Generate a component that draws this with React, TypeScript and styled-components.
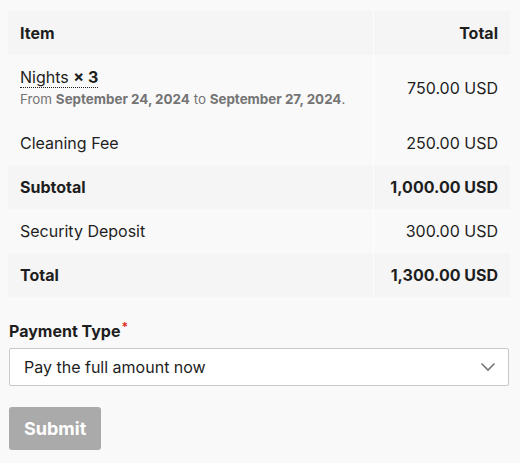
import styled, { createGlobalStyle } from 'styled-components';

const GlobalStyle = createGlobalStyle`
  html, body {
    margin: 0;
    background: #f9f9f9;
  }

  body {
    font-family: Inter, "Noto Sans", sans-serif;
    color: #1e1e1e;
  }
`;

type LineItem = {
  label: string;
  amount: string;
  strong?: boolean;
};

const lines: LineItem[] = [
  { label: 'Cleaning Fee', amount: '250.00 USD' },
  { label: 'Subtotal', amount: '1,000.00 USD', strong: true },
  { label: 'Security Deposit', amount: '300.00 USD' },
  { label: 'Total', amount: '1,300.00 USD', strong: true },
];

export default function App() {
  return (
    <>
      <GlobalStyle />
      <Page>
        <Table>
          <thead>
            <Row $shaded>
              <HeadCell>Item</HeadCell>
              <HeadCell $right>Total</HeadCell>
            </Row>
          </thead>
          <tbody>
            <Row>
              <Cell>
                <Nights>
                  Nights <b>× 3</b>
                </Nights>
                <Dates>
                  From <b>September 24, 2024</b> to <b>September 27, 2024</b>.
                </Dates>
              </Cell>
              <Cell $right>750.00 USD</Cell>
            </Row>
            {lines.map((line) => (
              <Row key={line.label} $shaded={line.strong}>
                <Cell $strong={line.strong}>{line.label}</Cell>
                <Cell $right $strong={line.strong}>
                  {line.amount}
                </Cell>
              </Row>
            ))}
          </tbody>
        </Table>

        <Field>
          <Label>
            Payment Type<Required>*</Required>
          </Label>
          <Select>
            <span>Pay the full amount now</span>
            <svg width="16" height="10" viewBox="0 0 16 10" fill="none">
              <path d="M1.5 1.5 8 8l6.5-6.5" stroke="#777" strokeWidth="1.6" />
            </svg>
          </Select>
        </Field>

        <SubmitButton disabled>Submit</SubmitButton>
      </Page>
    </>
  );
}

const Page = styled.div`
  display: flex;
  flex-direction: column;
  padding: 11px 11px 0 8px;
`;

const Table = styled.table`
  width: 502px;
  border-collapse: collapse;
  font-size: 16px;
`;

const Row = styled.tr<{ $shaded?: boolean }>`
  background: ${({ $shaded }) => ($shaded ? '#f5f5f5' : 'transparent')};
`;

const Cell = styled.td<{ $right?: boolean; $strong?: boolean }>`
  padding: 11px 12px;
  line-height: 22px;
  text-align: ${({ $right }) => ($right ? 'right' : 'left')};
  font-weight: ${({ $strong }) => ($strong ? 700 : 400)};
  vertical-align: middle;

  & + & {
    width: 112px;
    border-left: 1px solid #fdfdfd;
  }
`;

const HeadCell = styled(Cell).attrs({ as: 'th' })`
  font-weight: 700;
`;

const Nights = styled.span`
  border-bottom: 1px dotted #1e1e1e;
`;

const Dates = styled.div`
  font-size: 13.4px;
  line-height: 22px;
  color: #747474;

  b {
    font-weight: 700;
  }
`;

const Field = styled.div`
  display: flex;
  flex-direction: column;
  gap: 6px;
  margin-top: 23px;
  padding-left: 1px;
`;

const Label = styled.label`
  font-size: 16px;
  font-weight: 700;
  line-height: 22px;
`;

const Required = styled.sup`
  color: #e0291f;
  font-size: 12px;
  line-height: 0;
  margin-left: 1px;
`;

const Select = styled.div`
  display: flex;
  align-items: center;
  justify-content: space-between;
  width: 500px;
  height: 38px;
  box-sizing: border-box;
  padding: 0 12px 0 14px;
  background: #fff;
  border: 1px solid #c9c9c9;
  border-radius: 2px;
  font-size: 16px;
`;

const SubmitButton = styled.button`
  align-self: flex-start;
  margin: 21px 0 0 1px;
  height: 43px;
  padding: 0 15px;
  border: none;
  border-radius: 3px;
  background: #aaaaaa;
  color: #fff;
  font-family: Inter, "Noto Sans", sans-serif;
  font-size: 18px;
  font-weight: 700;
`;
